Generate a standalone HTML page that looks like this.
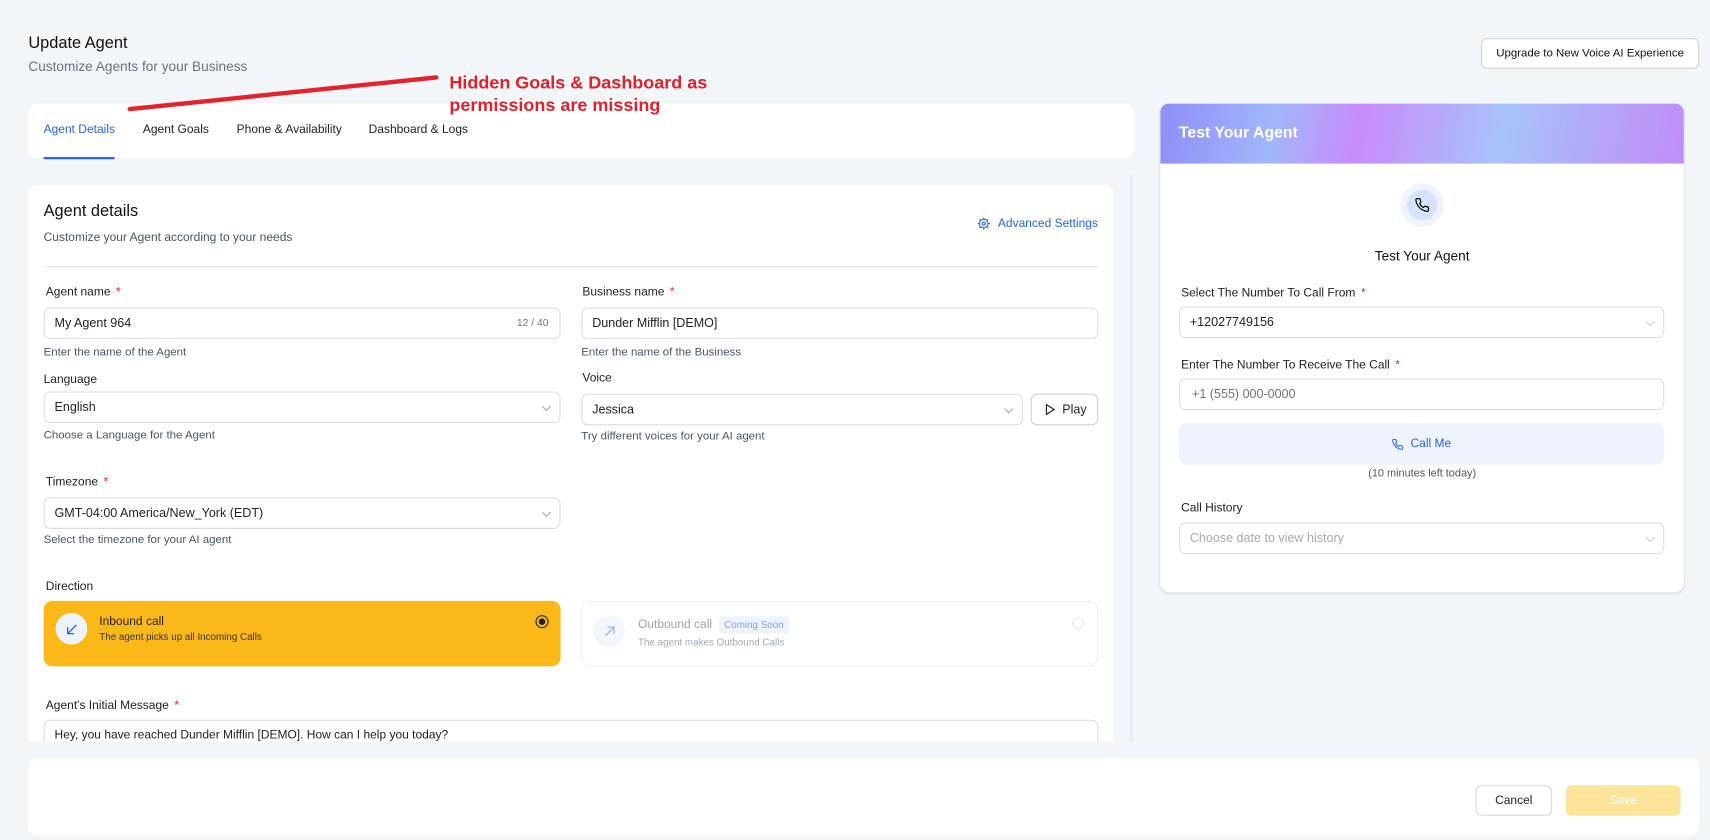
<!DOCTYPE html>
<html><head><meta charset="utf-8"><style>
*{box-sizing:border-box;margin:0;padding:0}
html,body{width:1710px;height:840px;overflow:hidden;background:#f2f6f9;font-family:"Liberation Sans",sans-serif;color:#1f2937}
#s{position:absolute;left:0;top:0;width:1568px;height:770px;transform:scale(1.0906);transform-origin:0 0}
.a{position:absolute;white-space:nowrap}
.card{position:absolute;background:#fff;border-radius:8px}
.lbl{position:absolute;font-size:11px;color:#222}
.lbl b{color:#e02424;font-weight:normal;margin-left:5px}
.help{position:absolute;font-size:10.5px;color:#4b5563}
.inp{position:absolute;background:#fff;border:1px solid #d9dde3;border-radius:6px;font-size:11.5px;color:#222;padding-left:9px;display:flex;align-items:center}
.chev{position:absolute;right:9px;top:50%;width:6px;height:6px;border-right:1px solid #aaa;border-bottom:1px solid #aaa;transform:translateY(-70%) rotate(45deg)}
</style></head><body><div id="s">
<div class="a" style="left:26px;top:31px;font-size:15px;color:#111">Update Agent</div>
<div class="a" style="left:26px;top:54px;font-size:12.5px;color:#6b7280">Customize Agents for your Business</div>
<div class="a" style="left:1358px;top:35px;width:200px;height:28px;border:1px solid #cfd4da;border-radius:5px;background:#fff;font-size:10.5px;color:#111;display:flex;align-items:center;justify-content:center">Upgrade to New Voice AI Experience</div>

<div class="card" style="left:26px;top:95px;width:1014px;height:50px"></div>
<div class="a" style="left:40px;top:113px;font-size:11px;color:#2563eb">Agent Details</div>
<div class="a" style="left:40px;top:144px;width:65px;height:1.5px;background:#2563eb"></div>
<div class="a" style="left:131px;top:113px;font-size:11px;color:#222">Agent Goals</div>
<div class="a" style="left:217px;top:113px;font-size:11px;color:#222">Phone &amp; Availability</div>
<div class="a" style="left:338px;top:113px;font-size:11px;color:#222">Dashboard &amp; Logs</div>

<svg class="a" style="left:0;top:0" width="700" height="120"><line x1="119" y1="100" x2="400" y2="71" stroke="#e5212b" stroke-width="4" stroke-linecap="round"/></svg>
<div class="a" style="left:412px;top:66px;font-size:16.5px;font-weight:bold;color:#e0212b;line-height:21px">Hidden Goals &amp; Dashboard as<br>permissions are missing</div>

<div class="a" style="left:1036px;top:160px;width:3px;height:520px;background:#e8edf5"></div>

<div class="card" style="left:26px;top:170px;width:995px;height:520px"></div>
<div class="a" style="left:40px;top:185px;font-size:15px;color:#111">Agent details</div>
<div class="a" style="left:40px;top:212px;font-size:11px;color:#4b5563">Customize your Agent according to your needs</div>
<svg class="a" style="left:896px;top:199px" width="12" height="12" viewBox="0 0 24 24" fill="none" stroke="#2563eb" stroke-width="2"><circle cx="12" cy="12" r="3"/><circle cx="12" cy="12" r="8"/><path d="M12 1v3M12 20v3M1 12h3M20 12h3M4 4l2 2M18 18l2 2M4 20l2-2M18 6l2-2"/></svg>
<div class="a" style="left:915px;top:199px;font-size:11px;color:#2563eb">Advanced Settings</div>
<div class="a" style="left:40px;top:244px;width:967px;height:1px;background:#e5e7eb"></div>

<div class="lbl" style="left:42px;top:262px">Agent name<b>*</b></div>
<div class="inp" style="left:40px;top:282px;width:474px;height:29px">My Agent 964<span style="position:absolute;right:10px;font-size:9.5px;color:#6b7280">12 / 40</span></div>
<div class="help" style="left:40px;top:317px">Enter the name of the Agent</div>
<div class="lbl" style="left:534px;top:262px">Business name<b>*</b></div>
<div class="inp" style="left:533px;top:282px;width:474px;height:29px">Dunder Mifflin [DEMO]</div>
<div class="help" style="left:533px;top:317px">Enter the name of the Business</div>

<div class="lbl" style="left:40px;top:342px">Language</div>
<div class="inp" style="left:40px;top:359px;width:474px;height:29px">English<i class="chev"></i></div>
<div class="help" style="left:40px;top:393px">Choose a Language for the Agent</div>
<div class="lbl" style="left:534px;top:341px">Voice</div>
<div class="inp" style="left:533px;top:361px;width:405px;height:29px">Jessica<i class="chev"></i></div>
<div class="inp" style="left:945px;top:361px;width:62px;height:29px;padding-left:12px;border-color:#c9ced5"><svg width="10" height="11" viewBox="0 0 10 11"><path d="M1.5 1l7 4.5-7 4.5z" fill="none" stroke="#222" stroke-width="1.1"/></svg><span style="margin-left:6px">Play</span></div>
<div class="help" style="left:533px;top:394px">Try different voices for your AI agent</div>

<div class="lbl" style="left:42px;top:436px">Timezone<b>*</b></div>
<div class="inp" style="left:40px;top:456px;width:474px;height:29px">GMT-04:00 America/New_York (EDT)<i class="chev"></i></div>
<div class="help" style="left:40px;top:489px">Select the timezone for your AI agent</div>

<div class="lbl" style="left:42px;top:532px">Direction</div>
<div class="a" style="left:40px;top:551px;width:474px;height:60px;background:#fbb919;border-radius:8px"></div>
<div class="a" style="left:51px;top:562px;width:29px;height:29px;border-radius:50%;background:#eef2fb;display:flex;align-items:center;justify-content:center"><svg width="12" height="12" viewBox="0 0 12 12" fill="none" stroke="#2563eb" stroke-width="1.2"><path d="M10 2L2 10M2 4v6h6"/></svg></div>
<div class="a" style="left:91px;top:564px;font-size:11px;color:#222">Inbound call</div>
<div class="a" style="left:91px;top:579px;font-size:9px;color:#333">The agent picks up all Incoming Calls</div>
<div class="a" style="left:491px;top:564px;width:12px;height:12px;border-radius:50%;border:1.3px solid #222;display:flex;align-items:center;justify-content:center"><i style="width:6px;height:6px;border-radius:50%;background:#222"></i></div>
<div class="a" style="left:533px;top:551px;width:474px;height:60px;border:1px solid #eceef1;border-radius:8px;background:#fff"></div>
<div class="a" style="left:544px;top:564px;width:29px;height:29px;border-radius:50%;background:#f3f6fd;display:flex;align-items:center;justify-content:center"><svg width="12" height="12" viewBox="0 0 12 12" fill="none" stroke="#93b0f0" stroke-width="1.2"><path d="M2 10L10 2M4 2h6v6"/></svg></div>
<div class="a" style="left:585px;top:567px;font-size:11px;color:#9ca3af">Outbound call</div>
<div class="a" style="left:659px;top:565px;height:16px;padding:0 5px;border-radius:4px;background:#eef3fd;font-size:9px;color:#7ea2ec;line-height:16px">Coming Soon</div>
<div class="a" style="left:585px;top:584px;font-size:9px;color:#a3a9b3">The agent makes Outbound Calls</div>
<div class="a" style="left:983px;top:566px;width:11px;height:11px;border-radius:50%;border:1px solid #e3e6ea"></div>

<div class="lbl" style="left:42px;top:641px">Agent's Initial Message<b>*</b></div>
<div class="a" style="left:40px;top:660px;width:967px;height:40px;border:1px solid #d9dde3;border-radius:6px;background:#fff"></div>
<div class="a" style="left:50px;top:668px;font-size:11px;color:#222">Hey, you have reached Dunder Mifflin [DEMO]. How can I help you today?</div>

<div class="a" style="left:0;top:680px;width:1568px;height:90px;background:#f2f6f9"></div>
<div class="card" style="left:26px;top:695px;width:1532px;height:71px"></div>
<div class="a" style="left:1353px;top:720px;width:70px;height:28px;border:1px solid #d6dae0;border-radius:5px;background:#fff;font-size:11px;display:flex;align-items:center;justify-content:center;color:#222">Cancel</div>
<div class="a" style="left:1436px;top:720px;width:105px;height:28px;border-radius:5px;background:#fde49b;font-size:11px;display:flex;align-items:center;justify-content:center;color:#fff">Save</div>

<div class="card" style="left:1064px;top:95px;width:480px;height:448px;box-shadow:0 1px 3px rgba(0,0,0,.12);overflow:hidden">
<div style="position:absolute;left:0;top:0;width:480px;height:55px;background:linear-gradient(100deg,#8f8ef8 0%,#a2b7fb 22%,#c88bfb 38%,#a8c3fb 65%,#c08cf8 100%)"></div>
<div class="a" style="left:17px;top:19px;font-size:14.5px;font-weight:bold;color:#fff">Test Your Agent</div>
<div class="a" style="left:220px;top:73px;width:40px;height:40px;border-radius:50%;background:#eef3fd"></div>
<div class="a" style="left:226px;top:79px;width:28px;height:28px;border-radius:50%;background:#d7e3fb;display:flex;align-items:center;justify-content:center"><svg width="14" height="14" viewBox="0 0 24 24" fill="none" stroke="#111" stroke-width="2"><path d="M22 16.9v3a2 2 0 0 1-2.2 2 19.8 19.8 0 0 1-8.6-3.1 19.5 19.5 0 0 1-6-6A19.8 19.8 0 0 1 2.1 4.2 2 2 0 0 1 4.1 2h3a2 2 0 0 1 2 1.7c.1 1 .4 1.9.7 2.8a2 2 0 0 1-.5 2.1L8 9.8a16 16 0 0 0 6 6l1.3-1.3a2 2 0 0 1 2.1-.4c.9.3 1.8.6 2.8.7a2 2 0 0 1 1.7 2z"/></svg></div>
<div class="a" style="left:0;width:480px;top:133px;text-align:center;font-size:12.5px;color:#111">Test Your Agent</div>
<div class="lbl" style="left:19px;top:168px">Select The Number To Call From<b>*</b></div>
<div class="inp" style="left:17px;top:186px;width:445px;height:29px">+12027749156<i class="chev" style="border-color:#ccc"></i></div>
<div class="lbl" style="left:19px;top:234px">Enter The Number To Receive The Call<b>*</b></div>
<div class="inp" style="left:17px;top:252px;width:445px;height:29px;color:#6b7280;padding-left:11px">+1 (555) 000-0000</div>
<div class="a" style="left:17px;top:293px;width:445px;height:38px;border-radius:7px;background:#eef3fd;display:flex;align-items:center;justify-content:center;font-size:11px;color:#2563eb"><svg width="11" height="11" viewBox="0 0 24 24" fill="none" stroke="#2563eb" stroke-width="2"><path d="M22 16.9v3a2 2 0 0 1-2.2 2 19.8 19.8 0 0 1-8.6-3.1 19.5 19.5 0 0 1-6-6A19.8 19.8 0 0 1 2.1 4.2 2 2 0 0 1 4.1 2h3a2 2 0 0 1 2 1.7c.1 1 .4 1.9.7 2.8a2 2 0 0 1-.5 2.1L8 9.8a16 16 0 0 0 6 6l1.3-1.3a2 2 0 0 1 2.1-.4c.9.3 1.8.6 2.8.7a2 2 0 0 1 1.7 2z"/></svg><span style="margin-left:6px">Call Me</span></div>
<div class="a" style="left:0;width:480px;top:334px;text-align:center;font-size:10px;color:#555">(10 minutes left today)</div>
<div class="lbl" style="left:19px;top:365px">Call History</div>
<div class="inp" style="left:17px;top:384px;width:445px;height:29px;color:#a3a9b3">Choose date to view history<i class="chev" style="border-color:#ccc"></i></div>
</div>
</div></body></html>
